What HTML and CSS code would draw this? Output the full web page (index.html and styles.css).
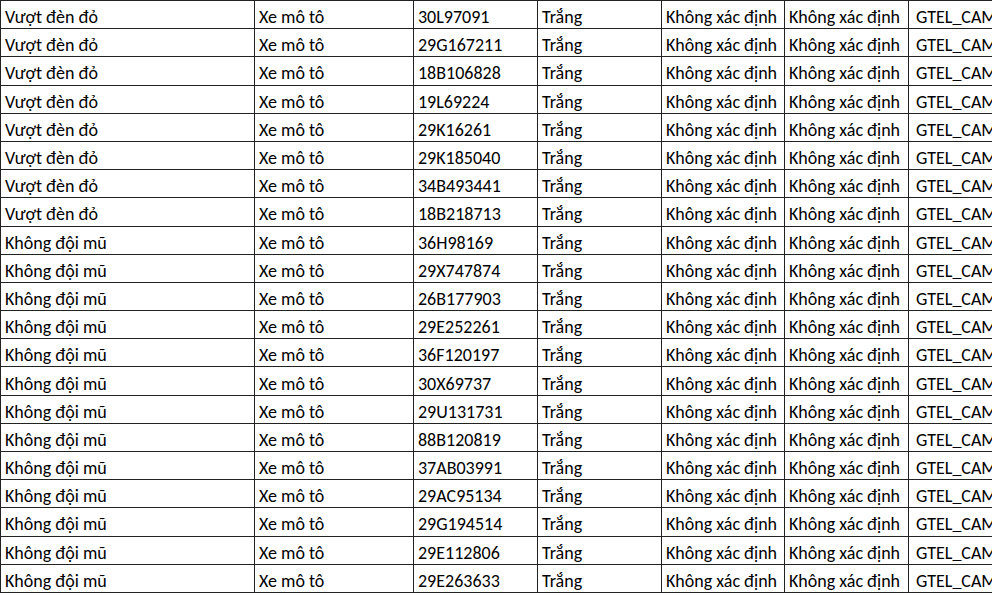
FILE: index.html
```html
<!DOCTYPE html>
<html lang="vi">
<head>
<meta charset="utf-8">
<link rel="stylesheet" href="styles.css">
</head>
<body>
<table class="sheet">
<colgroup>
<col class="c1"><col class="c2"><col class="c3"><col class="c4"><col class="c5"><col class="c6"><col class="c7">
</colgroup>
<tbody>
<tr><td>Vượt đèn đỏ</td><td>Xe mô tô</td><td>30L97091</td><td>Trắng</td><td>Không xác định</td><td>Không xác định</td><td class="cam">GTEL_CAM</td></tr>
<tr><td>Vượt đèn đỏ</td><td>Xe mô tô</td><td>29G167211</td><td>Trắng</td><td>Không xác định</td><td>Không xác định</td><td class="cam">GTEL_CAM</td></tr>
<tr><td>Vượt đèn đỏ</td><td>Xe mô tô</td><td>18B106828</td><td>Trắng</td><td>Không xác định</td><td>Không xác định</td><td class="cam">GTEL_CAM</td></tr>
<tr><td>Vượt đèn đỏ</td><td>Xe mô tô</td><td>19L69224</td><td>Trắng</td><td>Không xác định</td><td>Không xác định</td><td class="cam">GTEL_CAM</td></tr>
<tr><td>Vượt đèn đỏ</td><td>Xe mô tô</td><td>29K16261</td><td>Trắng</td><td>Không xác định</td><td>Không xác định</td><td class="cam">GTEL_CAM</td></tr>
<tr><td>Vượt đèn đỏ</td><td>Xe mô tô</td><td>29K185040</td><td>Trắng</td><td>Không xác định</td><td>Không xác định</td><td class="cam">GTEL_CAM</td></tr>
<tr><td>Vượt đèn đỏ</td><td>Xe mô tô</td><td>34B493441</td><td>Trắng</td><td>Không xác định</td><td>Không xác định</td><td class="cam">GTEL_CAM</td></tr>
<tr><td>Vượt đèn đỏ</td><td>Xe mô tô</td><td>18B218713</td><td>Trắng</td><td>Không xác định</td><td>Không xác định</td><td class="cam">GTEL_CAM</td></tr>
<tr><td>Không đội mũ</td><td>Xe mô tô</td><td>36H98169</td><td>Trắng</td><td>Không xác định</td><td>Không xác định</td><td class="cam">GTEL_CAM</td></tr>
<tr><td>Không đội mũ</td><td>Xe mô tô</td><td>29X747874</td><td>Trắng</td><td>Không xác định</td><td>Không xác định</td><td class="cam">GTEL_CAM</td></tr>
<tr><td>Không đội mũ</td><td>Xe mô tô</td><td>26B177903</td><td>Trắng</td><td>Không xác định</td><td>Không xác định</td><td class="cam">GTEL_CAM</td></tr>
<tr><td>Không đội mũ</td><td>Xe mô tô</td><td>29E252261</td><td>Trắng</td><td>Không xác định</td><td>Không xác định</td><td class="cam">GTEL_CAM</td></tr>
<tr><td>Không đội mũ</td><td>Xe mô tô</td><td>36F120197</td><td>Trắng</td><td>Không xác định</td><td>Không xác định</td><td class="cam">GTEL_CAM</td></tr>
<tr><td>Không đội mũ</td><td>Xe mô tô</td><td>30X69737</td><td>Trắng</td><td>Không xác định</td><td>Không xác định</td><td class="cam">GTEL_CAM</td></tr>
<tr><td>Không đội mũ</td><td>Xe mô tô</td><td>29U131731</td><td>Trắng</td><td>Không xác định</td><td>Không xác định</td><td class="cam">GTEL_CAM</td></tr>
<tr><td>Không đội mũ</td><td>Xe mô tô</td><td>88B120819</td><td>Trắng</td><td>Không xác định</td><td>Không xác định</td><td class="cam">GTEL_CAM</td></tr>
<tr><td>Không đội mũ</td><td>Xe mô tô</td><td>37AB03991</td><td>Trắng</td><td>Không xác định</td><td>Không xác định</td><td class="cam">GTEL_CAM</td></tr>
<tr><td>Không đội mũ</td><td>Xe mô tô</td><td>29AC95134</td><td>Trắng</td><td>Không xác định</td><td>Không xác định</td><td class="cam">GTEL_CAM</td></tr>
<tr><td>Không đội mũ</td><td>Xe mô tô</td><td>29G194514</td><td>Trắng</td><td>Không xác định</td><td>Không xác định</td><td class="cam">GTEL_CAM</td></tr>
<tr><td>Không đội mũ</td><td>Xe mô tô</td><td>29E112806</td><td>Trắng</td><td>Không xác định</td><td>Không xác định</td><td class="cam">GTEL_CAM</td></tr>
<tr><td>Không đội mũ</td><td>Xe mô tô</td><td>29E263633</td><td>Trắng</td><td>Không xác định</td><td>Không xác định</td><td class="cam">GTEL_CAM</td></tr>
</tbody>
</table>
</body>
</html>
```

FILE: styles.css
```css
html, body {
  margin: 0;
  padding: 0;
  background: #ffffff;
  overflow: hidden;
  width: 992px;
  height: 595px;
}

.sheet {
  border-collapse: collapse;
  table-layout: fixed;
  width: 1033px;
  font-family: "Carlito", "Calibri", "Open Sans", "Liberation Sans", sans-serif;
  font-size: 18px;
  color: #000000;
}

.c1 { width: 254px; }
.c2 { width: 159px; }
.c3 { width: 124px; }
.c4 { width: 124px; }
.c5 { width: 123px; }
.c6 { width: 124px; }
.c7 { width: 125px; }

.sheet td {
  border: 1px solid #222222;
  height: 28.2px;
  padding: 5px 4px 0 4px;
  box-sizing: border-box;
  white-space: nowrap;
  overflow: hidden;
  vertical-align: middle;
  line-height: 1;
}

.sheet td.cam {
  padding-left: 7px;
}
```
